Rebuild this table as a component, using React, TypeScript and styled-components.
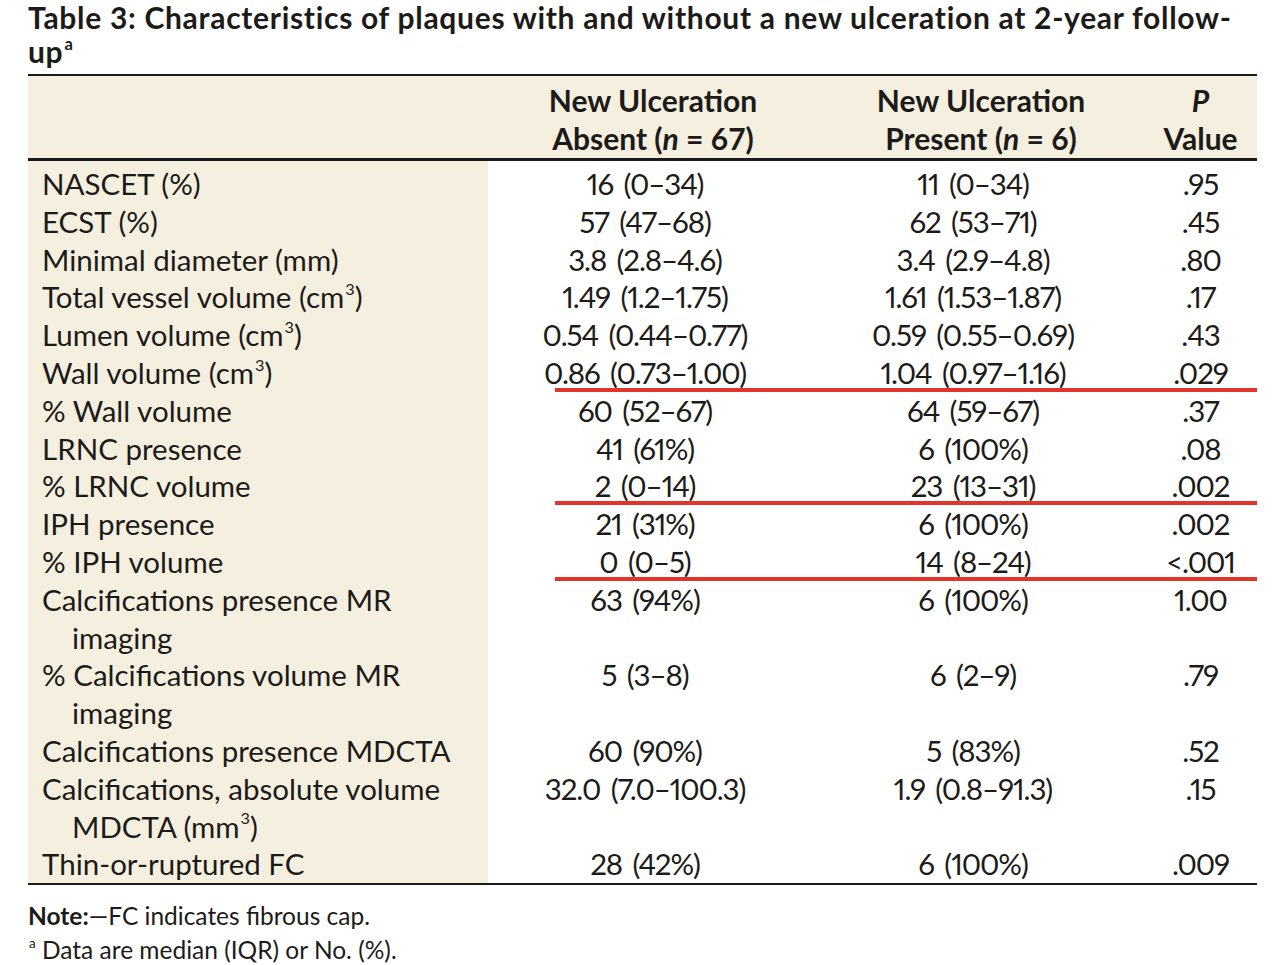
import styled, { createGlobalStyle } from 'styled-components';

const GlobalStyle = createGlobalStyle`
  body {
    margin: 0;
    background: #ffffff;
    color: #1d1b19;
    font-family: Lato, "Open Sans", sans-serif;
  }
`;

const Page = styled.div`
  width: 1280px;
  padding: 0 23px 0 28px;
  box-sizing: border-box;
`;

const Title = styled.h1`
  margin: 0;
  font-size: 30px;
  line-height: 34px;
  font-weight: 700;
  letter-spacing: 0.7px;
`;

const Sup = styled.sup`
  font-size: 0.55em;
  line-height: 0;
  position: relative;
  top: -0.15em;
  margin-left: 1px;
`;

const Table = styled.div`
  margin-top: 6px;
  border-top: 2px solid #1d1b19;
  border-bottom: 2px solid #1d1b19;
`;

const columns = '460px 314px 342px 1fr';

const HeadRow = styled.div`
  display: grid;
  grid-template-columns: ${columns};
  background: #f5efe0;
  padding: 5px 0 1px;
  border-bottom: 3px solid #1d1b19;
  font-weight: 700;
  font-size: 30px;
  line-height: 38px;
`;

const HeadCell = styled.div<{ $shift?: number }>`
  text-align: center;
  padding-left: ${({ $shift }) => $shift ?? 0}px;
`;

const Body = styled.div`
  padding-top: 4px;
  background: linear-gradient(to right, #f5efe0 460px, transparent 460px);
`;

const Row = styled.div<{ $marked?: boolean }>`
  display: grid;
  grid-template-columns: ${columns};
  position: relative;
  font-size: 29.5px;
  line-height: 37.8px;

  ${({ $marked }) =>
    $marked &&
    `
    &::after {
      content: '';
      position: absolute;
      left: 527px;
      right: 0;
      bottom: 0;
      height: 4px;
      background: #e2352a;
    }
  `}
`;

const Label = styled.div`
  padding-left: 44px;
  padding-right: 8px;
  text-indent: -30px;
`;

const Value = styled.div`
  text-align: center;
  font-variant-numeric: proportional-nums;
  letter-spacing: -1.1px;
  word-spacing: 4px;
`;

const Notes = styled.div`
  margin-top: 14px;
  font-size: 24.5px;
  line-height: 34px;
`;

const rows: { label: React.ReactNode; a: string; b: string; p: string; marked?: boolean }[] = [
  { label: 'NASCET (%)', a: '16 (0–34)', b: '11 (0–34)', p: '.95' },
  { label: 'ECST (%)', a: '57 (47–68)', b: '62 (53–71)', p: '.45' },
  { label: 'Minimal diameter (mm)', a: '3.8 (2.8–4.6)', b: '3.4 (2.9–4.8)', p: '.80' },
  { label: <>Total vessel volume (cm<Sup>3</Sup>)</>, a: '1.49 (1.2–1.75)', b: '1.61 (1.53–1.87)', p: '.17' },
  { label: <>Lumen volume (cm<Sup>3</Sup>)</>, a: '0.54 (0.44–0.77)', b: '0.59 (0.55–0.69)', p: '.43' },
  { label: <>Wall volume (cm<Sup>3</Sup>)</>, a: '0.86 (0.73–1.00)', b: '1.04 (0.97–1.16)', p: '.029', marked: true },
  { label: '% Wall volume', a: '60 (52–67)', b: '64 (59–67)', p: '.37' },
  { label: 'LRNC presence', a: '41 (61%)', b: '6 (100%)', p: '.08' },
  { label: '% LRNC volume', a: '2 (0–14)', b: '23 (13–31)', p: '.002', marked: true },
  { label: 'IPH presence', a: '21 (31%)', b: '6 (100%)', p: '.002' },
  { label: '% IPH volume', a: '0 (0–5)', b: '14 (8–24)', p: '<.001', marked: true },
  { label: 'Calcifications presence MR imaging', a: '63 (94%)', b: '6 (100%)', p: '1.00' },
  { label: '% Calcifications volume MR imaging', a: '5 (3–8)', b: '6 (2–9)', p: '.79' },
  { label: 'Calcifications presence MDCTA', a: '60 (90%)', b: '5 (83%)', p: '.52' },
  {
    label: <>Calcifications, absolute volume MDCTA (mm<Sup>3</Sup>)</>,
    a: '32.0 (7.0–100.3)',
    b: '1.9 (0.8–91.3)',
    p: '.15',
  },
  { label: 'Thin-or-ruptured FC', a: '28 (42%)', b: '6 (100%)', p: '.009' },
];

export default function App() {
  return (
    <Page>
      <GlobalStyle />
      <Title>
        Table 3: Characteristics of plaques with and without a new ulceration at 2-year follow-
        <br />
        up<Sup>a</Sup>
      </Title>
      <Table>
        <HeadRow>
          <HeadCell />
          <HeadCell $shift={16}>
            New Ulceration
            <br />
            Absent (<i>n</i> = 67)
          </HeadCell>
          <HeadCell $shift={16}>
            New Ulceration
            <br />
            Present (<i>n</i> = 6)
          </HeadCell>
          <HeadCell>
            <i>P</i>
            <br />
            Value
          </HeadCell>
        </HeadRow>
        <Body>
          {rows.map((row, i) => (
            <Row key={i} $marked={row.marked}>
              <Label>{row.label}</Label>
              <Value>{row.a}</Value>
              <Value>{row.b}</Value>
              <Value>{row.p}</Value>
            </Row>
          ))}
        </Body>
      </Table>
      <Notes>
        <div>
          <b>Note:</b>—FC indicates fibrous cap.
        </div>
        <div>
          <Sup>a</Sup> Data are median (IQR) or No. (%).
        </div>
      </Notes>
    </Page>
  );
}
